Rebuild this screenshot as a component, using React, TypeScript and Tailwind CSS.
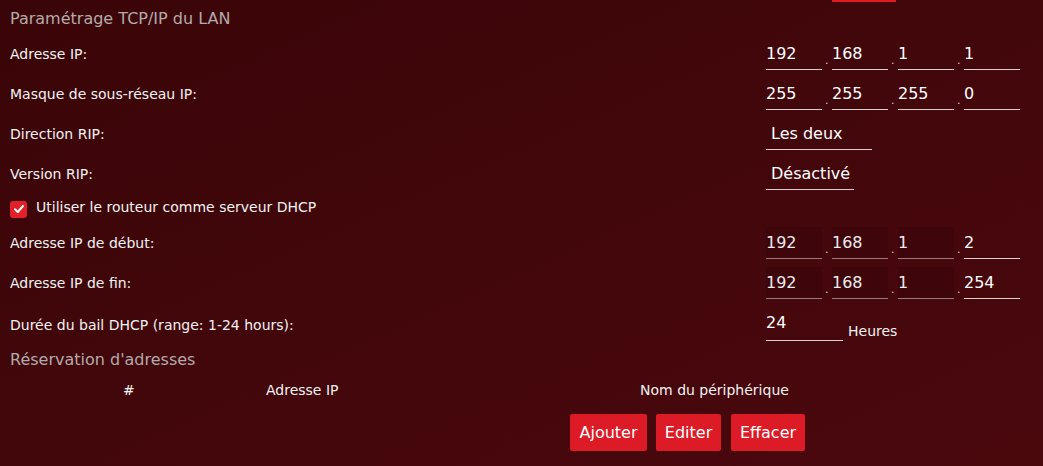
import React from "react";

const font = { fontFamily: '"DejaVu Sans", Verdana, sans-serif' };

function IpField({ parts, disabled = 0 }: { parts: string[]; disabled?: number }) {
  return (
    <div className="flex items-end">
      {parts.map((p, i) => (
        <React.Fragment key={i}>
          <div
            className={
              "w-[56px] h-[32px] flex items-center text-[16px] border-b " +
              (i < disabled ? "bg-[#3e060a] border-[#9a7c7e] text-[#ececec]" : "border-[#d6d0d0] text-white")
            }
          >
            {p}
          </div>
          {i < parts.length - 1 && (
            <span className="w-[10px] text-[11px] leading-none pb-[4px] pl-[3px] text-[#d8d8d8]">.</span>
          )}
        </React.Fragment>
      ))}
    </div>
  );
}

function Row({ label, h, children }: { label: string; h: string; children?: React.ReactNode }) {
  return (
    <div className={"flex items-center " + h}>
      <div className="w-[766px] pl-[10px] text-[14px] text-[#f2f2f2]">{label}</div>
      {children}
    </div>
  );
}

function Select({ value, w }: { value: string; w: string }) {
  return (
    <div className={"h-[32px] flex items-center pl-[5px] text-[16px] text-white border-b border-[#d6d0d0] " + w}>
      {value}
    </div>
  );
}

export default function App() {
  return (
    <div
      className="relative w-[1043px] h-[466px] overflow-hidden bg-gradient-to-br from-[#3a0508] via-[#42070b] to-[#4a080d]"
      style={font}
    >
      <div className="absolute left-[832px] top-0 w-[64px] h-[2px] bg-[#e01b24]" />

      <div className="h-[34px] pl-[10px] pt-[9px] text-[16px] leading-[20px] text-[#b4aaab]">Paramétrage TCP/IP du LAN</div>

      <Row label="Adresse IP:" h="h-[40px]">
        <IpField parts={["192", "168", "1", "1"]} />
      </Row>
      <Row label="Masque de sous-réseau IP:" h="h-[40px]">
        <IpField parts={["255", "255", "255", "0"]} />
      </Row>
      <Row label="Direction RIP:" h="h-[40px]">
        <Select value="Les deux" w="w-[106px]" />
      </Row>
      <Row label="Version RIP:" h="h-[40px]">
        <Select value="Désactivé" w="w-[88px]" />
      </Row>

      <div className="h-[30px] flex items-center pl-[10px] gap-[9px]">
        <div className="w-[17px] h-[17px] rounded-[3px] bg-[#e0202a] flex items-center justify-center">
          <svg width="12" height="12" viewBox="0 0 12 12" fill="none">
            <path d="M2 6.2 L4.8 9 L10 3" stroke="white" strokeWidth="2" strokeLinecap="round" strokeLinejoin="round" />
          </svg>
        </div>
        <span className="text-[14px] text-[#f2f2f2] -mt-[3px]">Utiliser le routeur comme serveur DHCP</span>
      </div>

      <Row label="Adresse IP de début:" h="h-[38px]">
        <IpField parts={["192", "168", "1", "2"]} disabled={3} />
      </Row>
      <Row label="Adresse IP de fin:" h="h-[42px]">
        <IpField parts={["192", "168", "1", "254"]} disabled={3} />
      </Row>
      <Row label="Durée du bail DHCP (range: 1-24 hours):" h="h-[42px]">
        <div className="flex items-end">
          <div className="w-[77px] h-[32px] flex items-center pb-[4px] text-[16px] text-white border-b border-[#d6d0d0]">
            24
          </div>
          <span className="ml-[5px] -mb-[1px] text-[14px] text-[#f2f2f2]">Heures</span>
        </div>
      </Row>

      <div className="h-[26px] flex items-center pl-[10px] pt-[1px] text-[16px] text-[#b4aaab]">Réservation d'adresses</div>

      <div className="h-[36px] flex items-center pt-[1px] text-[14px] text-[#f2f2f2]">
        <div className="w-[266px] pl-[123px]">#</div>
        <div className="w-[374px]">Adresse IP</div>
        <div>Nom du périphérique</div>
      </div>

      <div className="mt-[6px] ml-[570px] flex gap-[9px]">
        <button className="h-[37px] w-[77px] rounded-[2px] bg-[#dc1b26] text-white text-[16px]">Ajouter</button>
        <button className="h-[37px] w-[65px] rounded-[2px] bg-[#dc1b26] text-white text-[16px]">Editer</button>
        <button className="h-[37px] w-[74px] rounded-[2px] bg-[#dc1b26] text-white text-[16px] ml-[1px]">Effacer</button>
      </div>
    </div>
  );
}
